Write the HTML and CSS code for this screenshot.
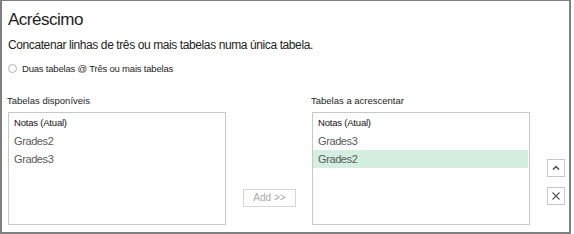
FILE: index.html
```html
<!DOCTYPE html>
<html lang="pt">
<head>
    <meta charset="UTF-8">
    <title>Acréscimo</title>
    <link rel="stylesheet" href="styles.css">
</head>
<body>
    <div class="dialog">
        <h1>Acréscimo</h1>
        <p class="subtitle">Concatenar linhas de três ou mais tabelas numa única tabela.</p>

        <label class="radio-row">
            <span class="radio"></span>
            <span>Duas tabelas @ Três ou mais tabelas</span>
        </label>

        <div class="tables-row">
            <div class="column">
                <div class="label">Tabelas disponíveis</div>
                <ul class="listbox">
                    <li class="current">Notas (Atual)</li>
                    <li>Grades2</li>
                    <li>Grades3</li>
                </ul>
            </div>

            <div class="middle">
                <button class="add-btn" disabled>Add &gt;&gt;</button>
            </div>

            <div class="column">
                <div class="label">Tabelas a acrescentar</div>
                <ul class="listbox">
                    <li class="current">Notas (Atual)</li>
                    <li>Grades3</li>
                    <li class="selected">Grades2</li>
                </ul>
            </div>

            <div class="side-buttons">
                <button class="icon-btn" title="Mover para cima">
                    <svg width="10" height="10" viewBox="0 0 10 10">
                        <path d="M2 6.5 L5 3.5 L8 6.5" fill="none" stroke="#444" stroke-width="1.4"/>
                    </svg>
                </button>
                <button class="icon-btn" title="Remover">
                    <svg width="10" height="10" viewBox="0 0 10 10">
                        <path d="M1.5 1.5 L8.5 8.5 M8.5 1.5 L1.5 8.5" fill="none" stroke="#555" stroke-width="1.1"/>
                    </svg>
                </button>
            </div>
        </div>
    </div>
</body>
</html>
```

FILE: styles.css
```css
* {
    box-sizing: border-box;
    font-family: 'Liberation Sans', Arial, sans-serif;
}

body {
    margin: 0;
    padding: 0;
    background-color: white;
}

.dialog {
    width: 571px;
    height: 234px;
    border: 2px solid #7f7f7f;
    border-top-width: 1px;
    padding: 0 0 0 6px;
    color: #1e1e1e;
}

h1 {
    font-size: 17px;
    font-weight: normal;
    letter-spacing: -0.5px;
    margin: 0;
    padding-top: 9px;
    line-height: 20px;
}

.subtitle {
    font-size: 12px;
    letter-spacing: -0.4px;
    margin: 7px 0 0 0;
    line-height: 16px;
}

.radio-row {
    display: flex;
    align-items: center;
    font-size: 9.5px;
    letter-spacing: -0.2px;
    margin-top: 8px;
    height: 14px;
}

.radio {
    width: 9px;
    height: 9px;
    border: 1px solid #b4b4b4;
    border-radius: 50%;
    margin-right: 5px;
}

.tables-row {
    display: flex;
    align-items: flex-start;
    margin-top: 20px;
}

.column {
    width: 218px;
}

.label {
    font-size: 9.5px;
    line-height: 12px;
    margin-left: -1px;
    margin-bottom: 5px;
}

.listbox {
    list-style: none;
    margin: 0;
    padding: 1px 1px 0 0;
    height: 113px;
    border: 1px solid #c8c8c8;
}

.listbox li {
    height: 18px;
    line-height: 18px;
    padding-left: 5px;
    font-size: 11px;
    letter-spacing: -0.4px;
    color: #5a5a5a;
}

.listbox li.current {
    font-size: 9.5px;
    letter-spacing: -0.2px;
    color: #111;
}

.listbox li.selected {
    background-color: #d4efe0;
}

.middle {
    width: 86px;
    padding: 92px 0 0 17px;
}

.add-btn {
    width: 53px;
    height: 18px;
    background: white;
    border: 1px solid #d6d6d6;
    color: #a8a8a8;
    font-size: 10px;
    padding: 0;
}

.side-buttons {
    display: flex;
    flex-direction: column;
    gap: 10px;
    margin-left: 17px;
    padding-top: 64px;
}

.icon-btn {
    width: 18px;
    height: 18px;
    background: white;
    border: 1px solid #c8c8c8;
    padding: 0;
    display: flex;
    align-items: center;
    justify-content: center;
}
```
